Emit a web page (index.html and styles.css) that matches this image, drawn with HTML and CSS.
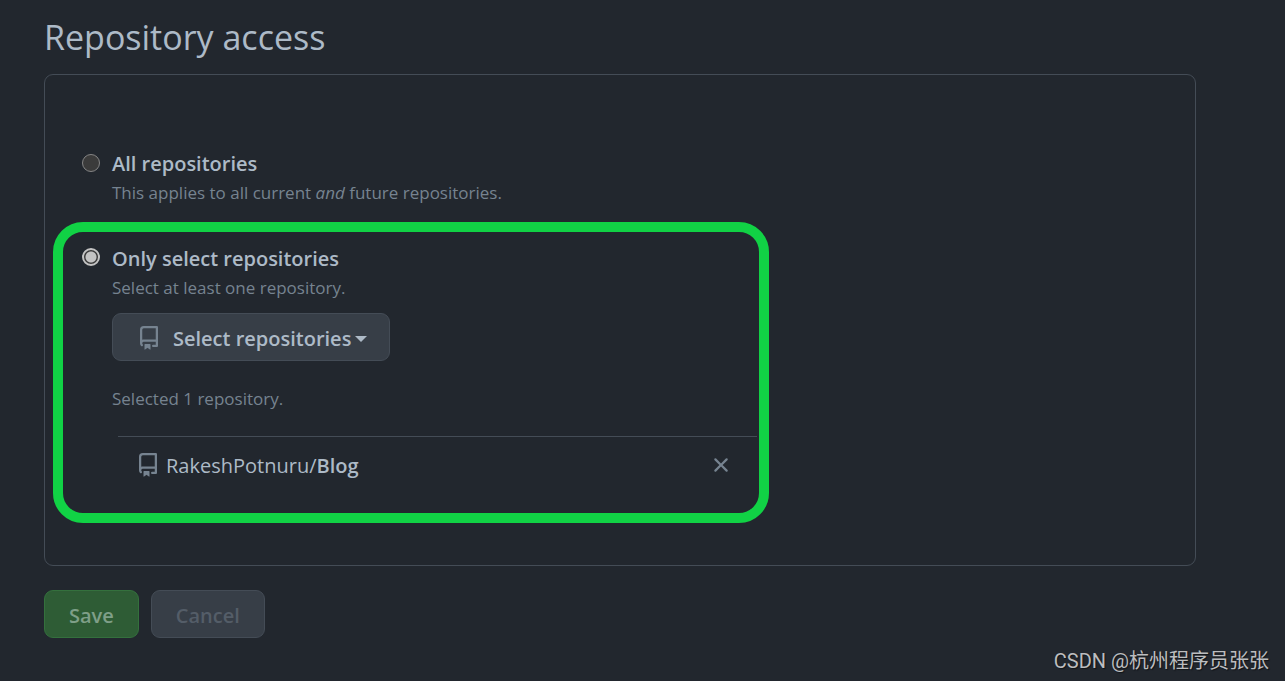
FILE: index.html
```
<!DOCTYPE html>
<html lang="en">
<head>
    <meta charset="UTF-8">
    <meta name="viewport" content="width=device-width, initial-scale=1.0">
    <title>Repository access</title>
    <link rel="stylesheet" href="styles.css">
</head>
<body>
    <!-- shared icons -->
    <svg class="sprite" aria-hidden="true">
        <symbol id="icon-repo" viewBox="0 0 16 16">
            <path fill-rule="evenodd" d="M2 2.5A2.5 2.5 0 014.5 0h8.75a.75.75 0 01.75.75v12.5a.75.75 0 01-.75.75h-2.5a.75.75 0 110-1.5h1.75v-2h-8a1 1 0 00-.714 1.7.75.75 0 01-1.072 1.05A2.495 2.495 0 012 11.5v-9zm10.5-1V9h-8c-.356 0-.694.074-1 .208V2.5a1 1 0 011-1h8zM5 12.25v3.25a.25.25 0 00.4.2l1.45-1.087a.25.25 0 01.3 0L8.6 15.7a.25.25 0 00.4-.2v-3.25a.25.25 0 00-.25-.25h-3.5a.25.25 0 00-.25.25z"/>
        </symbol>
    </svg>

    <main>
        <form>
            <h1>Repository access</h1>
            <div class="panel">
                <div class="option">
                    <input type="radio" name="access" id="all">
                    <div class="option-body">
                        <label for="all">All repositories</label>
                        <p class="note">This applies to all current <em>and</em> future repositories.</p>
                    </div>
                </div>

                <div class="option highlight">
                    <input type="radio" name="access" id="selected" checked>
                    <div class="option-body">
                        <label for="selected">Only select repositories</label>
                        <p class="note">Select at least one repository.</p>
                        <button type="button" class="btn btn-select">
                            <svg class="icon"><use href="#icon-repo"/></svg>
                            <span>Select repositories</span>
                            <span class="caret"></span>
                        </button>
                        <p class="note count">Selected 1 repository.</p>
                        <ul class="repos">
                            <li>
                                <svg class="icon"><use href="#icon-repo"/></svg>
                                <span class="repo-name">RakeshPotnuru/<b>Blog</b></span>
                                <button type="button" class="remove" aria-label="Remove Blog">
                                    <svg class="icon" viewBox="0 0 16 16"><path d="M3.72 3.72a.75.75 0 011.06 0L8 6.94l3.22-3.22a.75.75 0 111.06 1.06L9.06 8l3.22 3.22a.75.75 0 11-1.06 1.06L8 9.06l-3.22 3.22a.75.75 0 01-1.06-1.06L6.94 8 3.72 4.78a.75.75 0 010-1.06z"/></svg>
                                </button>
                            </li>
                        </ul>
                    </div>
                </div>
            </div>

            <div class="actions">
                <button type="submit" class="btn btn-save" disabled>Save</button>
                <button type="button" class="btn btn-cancel" disabled>Cancel</button>
            </div>
        </form>
    </main>
    <footer lang="zh-CN">CSDN @杭州程序员张张</footer>
</body>
</html>
```
FILE: styles.css
```
*{
    box-sizing: border-box;
}
body{
    margin: 0;
    background-color: #22272e;
    color: #adbac7;
    font-family: "Open Sans", "Noto Sans", sans-serif;
    font-size: 20px;
}
.sprite{
    display: none;
}
main{
    padding: 15px 89px 0 44px;
}
h1{
    margin: 0 0 15px;
    font-size: 34px;
    font-weight: 400;
    line-height: 44px;
}
.panel{
    padding: 74px 8px 42px;
    border: 1px solid #444c56;
    border-radius: 9px;
}

/* options */
.option{
    display: flex;
    gap: 12px;
    padding-left: 29px;
}
.option input{
    appearance: none;
    flex: none;
    width: 18px;
    height: 18px;
    margin: 5px 0 0;
    border: 1px solid #858585;
    border-radius: 50%;
    background-color: #3b3b3b;
}
.option input:checked{
    border: 2px solid #c3c3c3;
    background: radial-gradient(circle, #c3c3c3 5px, #3b3b3b 6px);
}
.option-body{
    flex: 1;
}
label{
    display: block;
    font-weight: 600;
    line-height: 30px;
}
.note{
    margin: 0;
    color: #768390;
    font-size: 17px;
    line-height: 28px;
}
.highlight{
    max-width: 716px;
    margin-top: 15px;
    padding: 12px 2px 18px 19px;
    border: 10px solid #11d245;
    border-radius: 30px;
}
.highlight input{
    margin-top: 4px;
}

/* buttons */
.btn{
    height: 48px;
    padding: 2px 24px 0;
    border: 1px solid #444c56;
    border-radius: 9px;
    background-color: #373e47;
    color: #adbac7;
    font: inherit;
    font-weight: 600;
}
.btn-select{
    display: flex;
    align-items: center;
    margin-top: 11px;
    padding-right: 22px;
}
.btn-select .icon{
    margin-right: 12px;
}
.caret{
    margin: 2px 0 0 4px;
    border: 6px solid transparent;
    border-top-color: #adbac7;
    border-bottom: 0;
}
.icon{
    display: block;
    flex: none;
    width: 24px;
    height: 24px;
    fill: #768390;
}

/* selected repositories */
.count{
    margin-top: 24px;
}
.repos{
    margin: 23px 0 0 6px;
    padding: 0;
    list-style: none;
}
.repos li{
    display: flex;
    align-items: center;
    height: 59px;
    padding: 0 24px 2px 18px;
    border-top: 1px solid #444c56;
}
.repo-name{
    flex: 1;
    margin-left: 6px;
}
.repo-name b{
    font-weight: 600;
}
.remove{
    padding: 0;
    border: 0;
    background: none;
}

.actions{
    display: flex;
    gap: 12px;
    margin-top: 24px;
}
.btn-save{
    border-color: #34703d;
    background-color: #2e5c35;
    color: #7f9f88;
}
.btn-cancel{
    color: #545d68;
}
footer{
    padding: 10px 16px 0;
    color: #bcbdbf;
    font-family: Roboto, "Noto Sans CJK SC", sans-serif;
    line-height: 26px;
    text-align: right;
    text-shadow: 1px 1px 1px #111418;
}
```
